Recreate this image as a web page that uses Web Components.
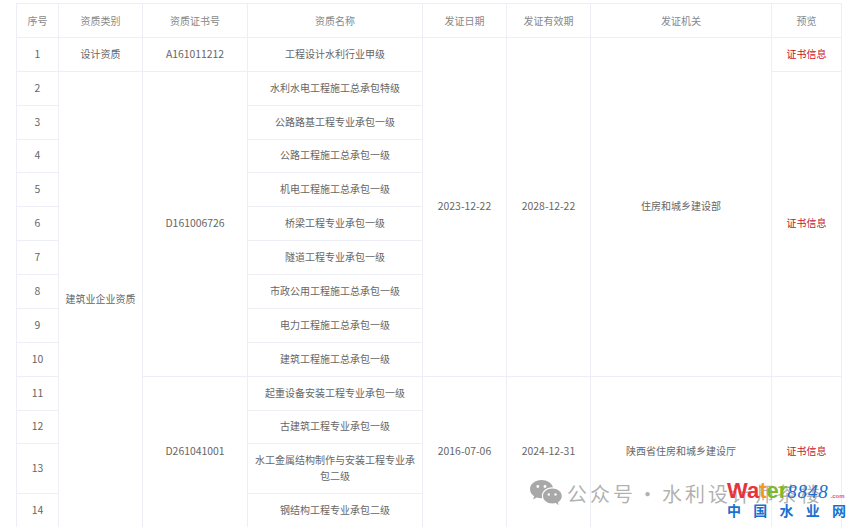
<!DOCTYPE html>
<html lang="zh">
<head>
<meta charset="utf-8">
<title>资质</title>
<style>
    html, body { margin: 0; height: 527px; overflow: hidden; background: #fff; }
    body { font-family: "Noto Sans CJK SC", "Liberation Sans", sans-serif; }
</style>
</head>
<body>
<cert-page>
    <cert-table></cert-table>
    <wechat-mark slot="overlay" name="公众号 · 水利设计师茶楼"></wechat-mark>
    <water-logo slot="overlay"></water-logo>
</cert-page>

<script>
const HEADERS = ['序号', '资质类别', '资质证书号', '资质名称', '发证日期', '发证有效期', '发证机关', '预览'];
const WIDTHS = [42, 84, 105, 175, 84, 84, 181, 70];
const ROW_HEIGHTS = [34, 34, 34, 33, 34, 34, 34, 34, 34, 34, 34, 33, 50, 34];

// [序号, 资质名称] plus the merged cells that start on that row
const ROWS = [
    { name: '工程设计水利行业甲级', type: ['设计资质', 1], code: ['A161011212', 1], date: ['2023-12-22', 10], until: ['2028-12-22', 10], org: ['住房和城乡建设部', 10], link: 1 },
    { name: '水利水电工程施工总承包特级', type: ['建筑业企业资质', 13], code: ['D161006726', 9], link: 9 },
    { name: '公路路基工程专业承包一级' },
    { name: '公路工程施工总承包一级' },
    { name: '机电工程施工总承包一级' },
    { name: '桥梁工程专业承包一级' },
    { name: '隧道工程专业承包一级' },
    { name: '市政公用工程施工总承包一级' },
    { name: '电力工程施工总承包一级' },
    { name: '建筑工程施工总承包一级' },
    { name: '起重设备安装工程专业承包一级', code: ['D261041001', 4], date: ['2016-07-06', 4], until: ['2024-12-31', 4], org: ['陕西省住房和城乡建设厅', 4], link: 4 },
    { name: '古建筑工程专业承包一级' },
    { name: '水工金属结构制作与安装工程专业承包二级' },
    { name: '钢结构工程专业承包二级' }
];

class CertPage extends HTMLElement {
    connectedCallback() {
        this.attachShadow({ mode: 'open' });
        this.shadowRoot.innerHTML = `
            <style>
                :host {
                    display: block;
                    position: relative;
                    height: 527px;
                    padding: 3px 13px 0 16px;
                    box-sizing: border-box;
                    overflow: hidden;
                }
            </style>
            <slot></slot>
            <slot name="overlay"></slot>
        `;
    }
}

class CertTable extends HTMLElement {
    connectedCallback() {
        this.attachShadow({ mode: 'open' });
        const cell = (val, cls) => val
            ? `<td rowspan="${val[1]}" class="${cls || ''}">${val[0]}</td>` : '';
        const rows = ROWS.map((r, i) => `
            <tr style="height:${ROW_HEIGHTS[i]}px">
                <td class="num">${i + 1}</td>
                ${cell(r.type)}
                ${cell(r.code, 'num')}
                <td class="name">${r.name}</td>
                ${cell(r.date, 'num')}
                ${cell(r.until, 'num')}
                ${cell(r.org)}
                ${r.link ? `<td rowspan="${r.link}" class="link">证书信息</td>` : ''}
            </tr>`).join('');
        this.shadowRoot.innerHTML = `
            <style>
                :host {
                    display: block;
                    font-family: "Noto Sans CJK SC", sans-serif;
                }
                table {
                    border-collapse: collapse;
                    table-layout: fixed;
                    width: 826px;
                    font-size: 10px;
                    color: #666;
                    text-align: center;
                }
                th, td {
                    border: 1px solid #edeef6;
                    padding: 0 0 2px;
                    font-weight: 400;
                    line-height: 16px;
                }
                th { color: #888; height: 33px; padding: 0; }
                .name { padding: 0 7px 2px; }
                .num { font-size: 10.4px; }
                .link { color: #c8161d; }
            </style>
            <table>
                <colgroup>${WIDTHS.map(w => `<col style="width:${w}px">`).join('')}</colgroup>
                <thead><tr>${HEADERS.map(h => `<th>${h}</th>`).join('')}</tr></thead>
                <tbody>${rows}</tbody>
            </table>
        `;
    }
}

class WechatMark extends HTMLElement {
    connectedCallback() {
        this.attachShadow({ mode: 'open' });
        this.shadowRoot.innerHTML = `
            <style>
                :host {
                    position: absolute;
                    left: 530px;
                    top: 480px;
                    display: flex;
                    align-items: center;
                    gap: 5px;
                    color: rgba(110, 110, 110, .55);
                    font: 20px/27px "Noto Sans CJK SC", sans-serif;
                    letter-spacing: 3px;
                    word-spacing: -6px;
                    white-space: nowrap;
                }
                svg { width: 32px; height: 27px; display: block; }
            </style>
            <svg viewBox="0 0 32 27" fill="#a8a8a8">
                <path d="M11.5 0C5.200 0 0 4.100 0 9.200c0 2.800 1.600 5.300 4.100 7L3.100 19.500l3.600-2c1.400.5 3 .8 4.800.8h.8c-.3-.8-.4-1.700-.4-2.500 0-4.800 4.600-8.500 10.200-8.500h.9C21.900 3.200 17.200 0 11.500 0z"/>
                <path d="M22.300 8.500c-5.200 0-9.300 3.300-9.300 7.500s4.100 7.500 9.300 7.500c1.200 0 2.300-.2 3.400-.5l3 2.300-.8-2.900c2.400-1.400 3.900-3.700 3.900-6.300 0-4.300-4.200-7.600-9.500-7.600z"/>
                <g fill="#fff">
                    <circle cx="7.800" cy="6.500" r="1.400"/><circle cx="15" cy="6.500" r="1.400"/>
                    <circle cx="18.800" cy="14.500" r="1.200"/><circle cx="25.500" cy="14.500" r="1.200"/>
                </g>
            </svg>
            <span>${this.getAttribute('name')}</span>
        `;
    }
}

class WaterLogo extends HTMLElement {
    connectedCallback() {
        this.attachShadow({ mode: 'open' });
        this.shadowRoot.innerHTML = `
            <style>
                :host {
                    position: absolute;
                    left: 727px;
                    top: 480px;
                    width: 119px;
                    display: block;
                    white-space: nowrap;
                }
                .top { display: flex; align-items: baseline; height: 21px; line-height: 21px; }
                .w { font: 700 22px/21px "Liberation Sans", sans-serif; }
                .n {
                    font: italic 19px/21px "Liberation Serif", serif;
                    color: #1a6fd0;
                    letter-spacing: .8px;
                }
                .com { font: 700 6px/21px "Liberation Sans", sans-serif; color: #e8575c; margin-left: 2px; }
                .cn {
                    display: flex;
                    justify-content: space-between;
                    font: 700 14px/18px "Noto Sans CJK SC", sans-serif;
                    color: #1a6fd0;
                }
            </style>
            <div class="top">
                <span class="w" style="color:#e8333c">Wa</span><span class="w" style="color:#f39a1e">t</span><span class="w" style="color:#7db928">er</span><span class="n">8848</span><span class="com">.com</span>
            </div>
            <div class="cn"><span>中</span><span>国</span><span>水</span><span>业</span><span>网</span></div>
        `;
    }
}

customElements.define('cert-page', CertPage);
customElements.define('cert-table', CertTable);
customElements.define('wechat-mark', WechatMark);
customElements.define('water-logo', WaterLogo);
</script>
</body>
</html>
